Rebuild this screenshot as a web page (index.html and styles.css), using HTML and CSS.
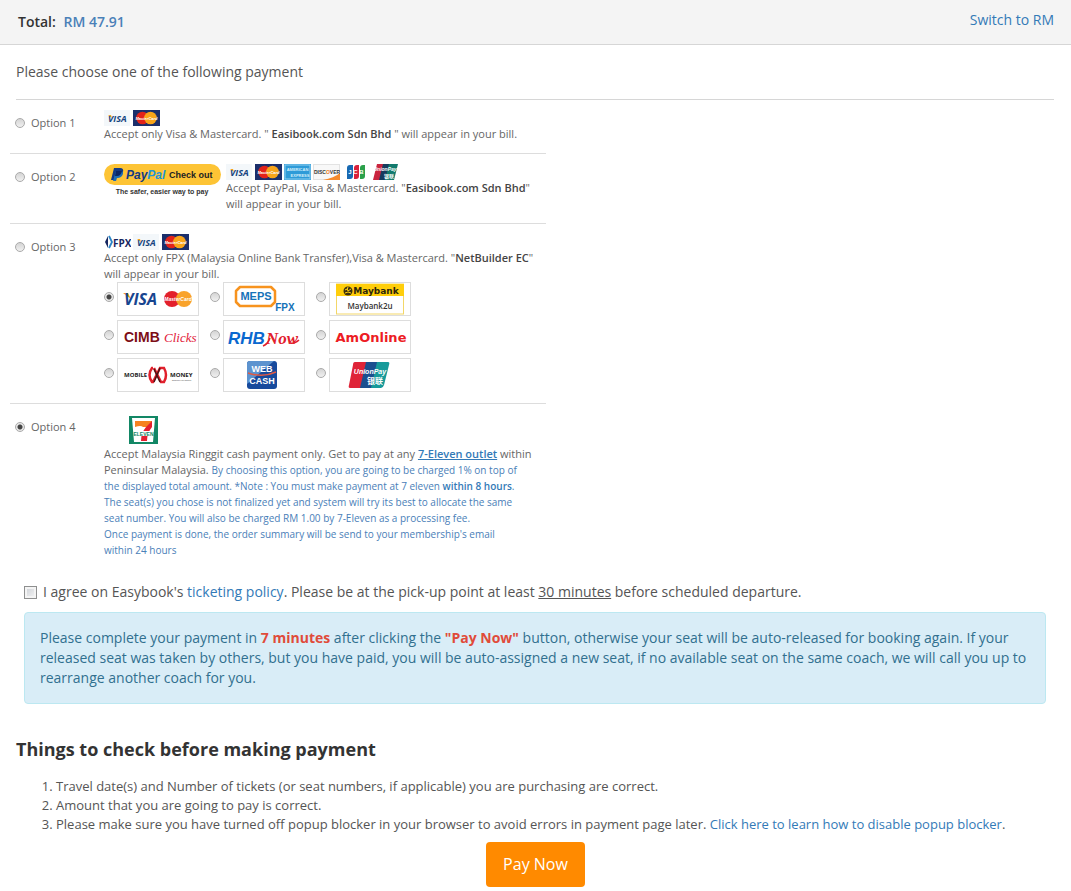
FILE: index.html
```html
<!DOCTYPE html>
<html lang="en">
<head>
    <meta charset="UTF-8">
    <meta name="viewport" content="width=device-width, initial-scale=1.0">
    <title>Payment</title>
    <link rel="stylesheet" href="styles.css">
</head>
<body>
    <!-- shared card logos -->
    <svg class="sprite" aria-hidden="true">
        <symbol id="visa" viewBox="0 0 27 16">
            <rect width="26" height="16" fill="#f3f7fa"/>
            <path d="M4 5h3l1 3z" fill="#f5a31c"/>
            <text x="4" y="12" class="logo-visa">VISA</text>
        </symbol>
        <symbol id="mastercard" viewBox="0 0 27 16">
            <rect width="27" height="16" fill="#1c2f6b"/>
            <circle cx="9.500" cy="8" r="6.300" fill="#e2231a"/>
            <circle cx="17.500" cy="8" r="6.300" fill="#f9a51a"/>
            <text x="13.500" y="10" class="logo-mc">MasterCard</text>
        </symbol>
    </svg>

    <header class="total-bar">
        <div class="total">Total: <span class="amount">RM 47.91</span></div>
        <a href="#">Switch to RM</a>
    </header>

    <main>
        <p class="intro">Please choose one of the following payment</p>

        <div class="options">
            <div class="option">
                <label class="option-label"><input type="radio" name="payment" value="1">Option 1</label>
                <div class="option-body">
                    <div class="logos">
                        <svg class="card"><use href="#visa"/></svg>
                        <svg class="card"><use href="#mastercard"/></svg>
                    </div>
                    <p>Accept only Visa &amp; Mastercard. " <strong>Easibook.com Sdn Bhd</strong> " will appear in your bill.</p>
                </div>
            </div>

            <div class="option">
                <label class="option-label"><input type="radio" name="payment" value="2">Option 2</label>
                <div class="option-body paypal-row">
                    <svg class="paypal" viewBox="0 0 117 36">
                        <rect y="0" width="117" height="21" rx="10.500" fill="#fdc435"/>
                        <path d="M10 4h6q4 0 3 4t-6 4h-2l-1 4H7z" fill="#123984"/>
                        <path d="M12 7h6q2 2 0 5-2 2-4 2h-1l-1 3H9z" fill="#1d6db5"/>
                        <path d="M12 7h6q-1 5-5 5h-2z" fill="#0a2565"/>
                        <text x="22" y="15" class="logo-paypal" fill="#123984">Pay<tspan fill="#2196d6">Pal</tspan></text>
                        <text x="65" y="14" class="logo-checkout">Check out</text>
                        <text x="58" y="30" class="logo-safer">The safer, easier way to pay</text>
                    </svg>
                    <div>
                        <div class="logos">
                            <svg class="card"><use href="#visa"/></svg>
                            <svg class="card"><use href="#mastercard"/></svg>
                            <svg class="card" viewBox="0 0 27 16">
                                <rect width="27" height="16" fill="#2e9bd8"/>
                                <rect x="1" y="1" width="25" height="14" fill="none" stroke="#8fd0f0"/>
                                <text x="13.500" y="7" class="logo-amex">AMERICAN</text>
                                <text x="16" y="13" class="logo-amex">EXPRESS</text>
                            </svg>
                            <svg class="card" viewBox="0 0 27 16">
                                <rect x=".5" y=".5" width="26" height="15" fill="#f8f8f8" stroke="#e3e3e3"/>
                                <path d="M27 9v7H10q11-2 17-7z" fill="#f58a2c"/>
                                <text x="1" y="10" class="logo-discover">DISC<tspan fill="#f07c1c">O</tspan>VER</text>
                            </svg>
                            <svg class="card" viewBox="0 0 27 16">
                                <path d="M8 1h3v11q0 3-3 3H5V4q0-3 3-3z" fill="#1769b2"/>
                                <path d="M15 1h2v11q0 3-3 3h-2V4q0-3 3-3z" fill="#d9203b"/>
                                <path d="M21 1h2v11q0 3-3 3h-2V4q0-3 3-3z" fill="#2ba04a"/>
                                <text x="14" y="10" class="logo-jcb">J C B</text>
                            </svg>
                            <svg class="card" viewBox="0 0 27 16">
                                <path d="M6 0h7L9 16H2z" fill="#c9243f"/>
                                <path d="M12 0h8l-4 16H8z" fill="#173c5e"/>
                                <path d="M18 0h9l-4 16H14z" fill="#117a6d"/>
                                <text x="14" y="7" class="logo-up-small">UnionPay</text>
                                <text x="18" y="14" class="logo-up-cjk-small">银联</text>
                            </svg>
                        </div>
                        <p>Accept PayPal, Visa &amp; Mastercard. "<strong>Easibook.com Sdn Bhd</strong>"<br>will appear in your bill.</p>
                    </div>
                </div>
            </div>

            <div class="option">
                <label class="option-label"><input type="radio" name="payment" value="3">Option 3</label>
                <div class="option-body">
                    <div class="logos">
                        <svg class="card" viewBox="0 0 27 16">
                            <path d="M4 2L1 8l3 6z" fill="#16265f"/>
                            <path d="M5 2l3 6-3 6" fill="none" stroke="#2a84c6" stroke-width="1.800"/>
                            <text x="9" y="13" class="logo-fpx">FPX</text>
                        </svg>
                        <svg class="card"><use href="#visa"/></svg>
                        <svg class="card"><use href="#mastercard"/></svg>
                    </div>
                    <p>Accept only FPX (Malaysia Online Bank Transfer),Visa &amp; Mastercard. "<strong>NetBuilder EC</strong>"<br>will appear in your bill.</p>
                    <div class="banks">
                        <label class="bank">
                            <input type="radio" name="bank" value="card" aria-label="Visa and MasterCard" checked>
                            <svg viewBox="0 0 80 32">
                                <path d="M5 10h5l3 6z" fill="#f5a31c"/>
                                <text x="6" y="22" class="logo-visa-lg">VISA</text>
                                <circle cx="54" cy="16" r="8" fill="#e3202c"/>
                                <circle cx="66" cy="16" r="8" fill="#f9a32b"/>
                                <text x="60" y="18" class="logo-mc-lg">MasterCard</text>
                            </svg>
                        </label>
                        <label class="bank">
                            <input type="radio" name="bank" value="meps" aria-label="MEPS FPX">
                            <svg viewBox="0 0 80 32">
                                <path d="M16 4h31l4 4v11l-4 4H16l-4-4V8z" fill="#fff" stroke="#f7931e" stroke-width="2.500" stroke-linejoin="round"/>
                                <text x="32" y="17" class="logo-meps">MEPS</text>
                                <text x="61" y="28" class="logo-meps logo-meps-fpx">FPX</text>
                            </svg>
                        </label>
                        <label class="bank">
                            <input type="radio" name="bank" value="maybank" aria-label="Maybank2u">
                            <svg viewBox="0 0 80 32">
                                <rect x="6.500" y="1" width="67" height="30" fill="#fff" stroke="#f3d768"/>
                                <rect x="6" y="1" width="68" height="12" fill="#ffce0a"/>
                                <circle cx="18" cy="8" r="4.500" fill="#3b3110"/>
                                <path d="M15 7l2-1 1 2 3-2M15 10l3-1 3 1M18 4l-1 3" fill="none" stroke="#ffce0a"/>
                                <text x="46" y="11" class="logo-maybank">Maybank</text>
                                <text x="40" y="26" class="logo-maybank2u">Maybank2u</text>
                            </svg>
                        </label>
                        <label class="bank">
                            <input type="radio" name="bank" value="cimb" aria-label="CIMB Clicks">
                            <svg viewBox="0 0 80 32">
                                <text x="6" y="21" class="logo-cimb">CIMB</text>
                                <text x="46" y="21" class="logo-clicks">Clicks</text>
                            </svg>
                        </label>
                        <label class="bank">
                            <input type="radio" name="bank" value="rhb" aria-label="RHB Now">
                            <svg viewBox="0 0 80 32">
                                <text x="4" y="23" class="logo-rhb">RHB</text>
                                <text x="42" y="23" class="logo-now">Now</text>
                                <path d="M39 25q5-2 7-8M66 22q5 1 9-3" fill="none" stroke="#e2202c" stroke-width="1.500"/>
                            </svg>
                        </label>
                        <label class="bank">
                            <input type="radio" name="bank" value="amonline" aria-label="AmOnline">
                            <svg viewBox="0 0 80 32">
                                <text x="41" y="21" class="logo-amonline">AmOnline</text>
                            </svg>
                        </label>
                        <label class="bank">
                            <input type="radio" name="bank" value="mobilemoney" aria-label="Mobile Money">
                            <svg viewBox="0 0 80 32">
                                <text x="6" y="18" class="logo-money">MOBILE</text>
                                <path d="M35 9h-1q-5 7 0 14h1l7-14h1" fill="none" stroke="#e1202c" stroke-width="2.500"/>
                                <path d="M36 9l7 14h3q4-7 0-14h-3" fill="none" stroke="#e1202c" stroke-width="2.500"/>
                                <path d="M36 10l6 13M42 9l-6 14" fill="none" stroke="#4a1518" stroke-width="1.500"/>
                                <text x="52" y="18" class="logo-money">MONEY</text>
                                <text x="54" y="22" class="logo-money-tag">Mobilise Like Money</text>
                            </svg>
                        </label>
                        <label class="bank">
                            <input type="radio" name="bank" value="webcash" aria-label="Web Cash">
                            <svg viewBox="0 0 80 32">
                                <rect x="23" y="2" width="30" height="28" rx="3" fill="#174a9c"/>
                                <path d="M26 2h24L23 25V5q0-3 3-3z" fill="#5d93cf"/>
                                <path d="M24 14q15 5 28-1" fill="none" stroke="#e05a43" stroke-width="1.500"/>
                                <text x="38" y="13" class="logo-webcash">WEB</text>
                                <text x="38" y="25" class="logo-webcash">CASH</text>
                            </svg>
                        </label>
                        <label class="bank">
                            <input type="radio" name="bank" value="unionpay" aria-label="UnionPay">
                            <svg viewBox="0 0 80 32">
                                <path d="M25 3h13l-6 26H20q-2 0-1-3l4-20q0-3 2-3z" fill="#df2438"/>
                                <path d="M36 3h13l-6 26H30z" fill="#1b4f8f"/>
                                <path d="M47 3h11q2 0 1 3l-5 20q-1 3-3 3H41z" fill="#179a9a"/>
                                <text x="40" y="15" class="logo-up">UnionPay</text>
                                <text x="45" y="25" class="logo-up-cjk">银联</text>
                            </svg>
                        </label>
                    </div>
                </div>
            </div>

            <div class="option">
                <label class="option-label"><input type="radio" name="payment" value="4" checked>Option 4</label>
                <div class="option-body">
                    <svg class="seven" viewBox="0 0 29 28">
                        <rect width="29" height="28" fill="#128765"/>
                        <path d="M3 2h23l-2 24H5z" fill="#fff"/>
                        <path d="M6 5h17v6h-9q-2-2-8 0z" fill="#f58220"/>
                        <path d="M17 11l6-6v6q-5 6-5 14h-6q0-8 5-14z" fill="#e4202f"/>
                        <rect x="5" y="15" width="19" height="5" fill="#fff"/>
                        <text x="14.500" y="19.500" class="logo-eleven">ELEVEN</text>
                    </svg>
                    <p>Accept Malaysia Ringgit cash payment only. Get to pay at any <a href="#" class="outlet">7-Eleven outlet</a> within<br>Peninsular Malaysia. <span class="note">By choosing this option, you are going to be charged 1% on top of<br>the displayed total amount. *Note : You must make payment at 7 eleven <strong>within 8 hours</strong>.<br>The seat(s) you chose is not finalized yet and system will try its best to allocate the same<br>seat number. You will also be charged RM 1.00 by 7-Eleven as a processing fee.<br>Once payment is done, the order summary will be send to your membership's email<br>within 24 hours</span></p>
                </div>
            </div>
        </div>

        <div class="agree">
            <input type="checkbox" id="agree">
            <label for="agree">I agree on Easybook's <a href="#">ticketing policy</a>. Please be at the pick-up point at least <u>30 minutes</u> before scheduled departure.</label>
        </div>

        <div class="alert">
            Please complete your payment in <strong>7 minutes</strong> after clicking the <strong>"Pay Now"</strong> button, otherwise your seat will be auto-released for booking again. If your released seat was taken by others, but you have paid, you will be auto-assigned a new seat, if no available seat on the same coach, we will call you up to rearrange another coach for you.
        </div>

        <h2>Things to check before making payment</h2>
        <ol class="checks">
            <li>Travel date(s) and Number of tickets (or seat numbers, if applicable) you are purchasing are correct.</li>
            <li>Amount that you are going to pay is correct.</li>
            <li>Please make sure you have turned off popup blocker in your browser to avoid errors in payment page later. <a href="#">Click here to learn how to disable popup blocker</a>.</li>
        </ol>

        <div class="actions">
            <button type="button" class="pay-button">Pay Now</button>
        </div>
    </main>
</body>
</html>
```
FILE: styles.css
```css
* { margin: 0; padding: 0; box-sizing: border-box; }
body {
    font-family: "Open Sans", "Noto Sans", sans-serif;
    font-size: 14px;
    line-height: 20px;
    color: #555;
    background: #fff;
}
a {
    color: #337ab7;
    text-decoration: none;
}
.sprite {
    display: none;
}
.total-bar {
    display: flex;
    justify-content: space-between;
    padding: 10px 17px 12px 18px;
    background: #f4f4f4;
    border-bottom: 1px solid #d6d6d6;
}
.total {
    padding-top: 2px;
    font-weight: 600;
    color: #333;
}
.amount {
    margin-left: 4px;
    color: #4a80b8;
}
.intro {
    margin: 0 17px 0 16px;
    padding: 17px 0;
    border-bottom: 1px solid #d6d6d6;
}

/* payment options */
.options {
    width: 50%;
    margin-left: 10px;
    font-size: 11px;
    line-height: 16px;
    color: #666;
}
.option {
    display: flex;
    padding: 10px 0 11px;
    border-bottom: 1px solid #ddd;
}
.option:last-child {
    border-bottom: 0;
}
.option-label {
    flex: none;
    display: flex;
    align-items: center;
    gap: 6px;
    width: 94px;
    height: 16px;
    margin-top: 5px;
    padding-left: 5px;
}
.option-body {
    flex: 1;
}
.option-body strong {
    font-weight: 600;
    color: #444;
}
.logos {
    display: flex;
    gap: 2px;
}
.card {
    display: block;
    width: 27px;
    height: 16px;
}
.paypal-row {
    display: flex;
    gap: 5px;
}
.paypal {
    flex: none;
    width: 117px;
    height: 36px;
}
.seven {
    display: block;
    width: 29px;
    height: 28px;
    margin: 2px 0 2px 25px;
}
input[type="radio"] {
    appearance: none;
    flex: none;
    width: 10px;
    height: 10px;
    border: 1px solid #aaa;
    border-radius: 50%;
    background: linear-gradient(#d4d4d4, #f0f0f0);
}
input[type="radio"]:checked {
    background: radial-gradient(circle, #444 0 2px, #e8e8e8 3px);
}
.option-body .outlet {
    color: #337ab7;
    font-weight: 600;
    text-decoration: underline;
}
.note {
    font-size: 10px;
    color: #4a80b8;
}
.option-body .note strong {
    color: #337ab7;
}
.banks {
    display: grid;
    grid-template-columns: repeat(3, 95px);
    column-gap: 11px;
    row-gap: 4px;
}
.bank {
    display: flex;
    gap: 3px;
}
.bank input {
    margin-top: 10px;
}
.bank svg {
    width: 82px;
    height: 34px;
    border: 1px solid #ddd;
}

/* agreement and notice */
.agree {
    display: flex;
    align-items: center;
    gap: 6px;
    margin: 13px 25px 10px 24px;
}
.agree input {
    appearance: none;
    flex: none;
    width: 13px;
    height: 13px;
    border: 1px solid #8e8f8f;
    background: linear-gradient(135deg, #cbcfd5, #f6f6f6);
    box-shadow: inset 0 0 0 2px #f4f4f4;
}
.agree input:checked {
    background: #337ab7;
}
.alert {
    margin: 0 25px 35px 24px;
    padding: 15px;
    color: #31708f;
    background: #d9edf7;
    border: 1px solid #bce8f1;
    border-radius: 4px;
}
.alert strong {
    color: #e04b3a;
}
h2 {
    margin: 0 16px 18px;
    font-size: 18px;
    line-height: 20px;
    color: #333;
}
.checks {
    padding: 0 16px 0 56px;
    font-size: 13px;
    line-height: 19px;
}
.actions {
    margin-top: 8px;
    text-align: center;
}
.pay-button {
    padding: 10px 17px;
    font: 16px/25px "Open Sans", "Noto Sans", sans-serif;
    color: #fff;
    background: #ff8a00;
    border: 0;
    border-radius: 4px;
    cursor: pointer;
}

/* logo lettering */
svg text {
    font-family: "Liberation Sans", sans-serif;
    font-weight: bold;
}
svg .logo-visa {
    font-family: "Open Sans", sans-serif;
    font-size: 9px;
    font-style: italic;
    fill: #17457f;
}
.logo-mc {
    font-size: 4px;
    font-style: italic;
    text-anchor: middle;
    fill: #fff;
}
.logo-paypal {
    font-size: 12px;
    font-style: italic;
}
.logo-checkout {
    font-size: 9px;
    fill: #222;
}
.logo-safer {
    font-size: 7px;
    text-anchor: middle;
    fill: #333;
}
.logo-amex {
    font-size: 4px;
    text-anchor: middle;
    fill: #d4effb;
}
.logo-discover {
    font-size: 5px;
    fill: #333;
}
.logo-jcb {
    font-size: 6px;
    text-anchor: middle;
    fill: #fff;
}
.logo-up-small {
    font-size: 5px;
    font-style: italic;
    text-anchor: middle;
    fill: #fff;
}
svg .logo-up-cjk-small {
    font-family: "Noto Sans CJK SC", sans-serif;
    font-size: 5px;
    text-anchor: middle;
    fill: #fff;
}
svg .logo-fpx {
    font-family: "Open Sans", sans-serif;
    font-size: 10px;
    fill: #16265f;
}
svg .logo-visa-lg {
    font-family: "Open Sans", sans-serif;
    font-size: 16px;
    font-style: italic;
    fill: #17458f;
}
.logo-mc-lg {
    font-size: 5px;
    font-style: italic;
    text-anchor: middle;
    fill: #fff;
}
.logo-meps {
    font-size: 11px;
    text-anchor: middle;
    fill: #1672b8;
}
.logo-meps-fpx {
    font-size: 10px;
}
svg .logo-maybank {
    font-family: "DejaVu Sans", sans-serif;
    font-size: 9px;
    text-anchor: middle;
    fill: #2d260c;
}
svg .logo-maybank2u {
    font-family: "Open Sans", sans-serif;
    font-size: 8px;
    font-weight: 600;
    text-anchor: middle;
    fill: #333;
}
.logo-cimb {
    font-size: 14px;
    fill: #7d0e16;
}
svg .logo-clicks {
    font-family: "Liberation Serif", serif;
    font-size: 13px;
    font-style: italic;
    font-weight: normal;
    fill: #e2203a;
}
.logo-rhb {
    font-size: 17px;
    font-style: italic;
    fill: #0a68cf;
}
svg .logo-now {
    font-family: "Liberation Serif", serif;
    font-size: 17px;
    font-style: italic;
    fill: #e2202c;
}
svg .logo-amonline {
    font-family: "DejaVu Sans", sans-serif;
    font-size: 13px;
    text-anchor: middle;
    fill: #ed1c24;
}
svg .logo-money {
    font-family: "Open Sans", sans-serif;
    font-size: 6px;
    fill: #222;
}
.logo-money-tag {
    font-size: 2px;
    fill: #777;
}
.logo-webcash {
    font-size: 9px;
    text-anchor: middle;
    fill: #fff;
}
.logo-up {
    font-size: 7px;
    font-style: italic;
    text-anchor: middle;
    fill: #fff;
}
svg .logo-up-cjk {
    font-family: "Noto Sans CJK SC", sans-serif;
    font-size: 8px;
    text-anchor: middle;
    fill: #fff;
}
.logo-eleven {
    font-size: 5px;
    text-anchor: middle;
    fill: #128765;
}
```
